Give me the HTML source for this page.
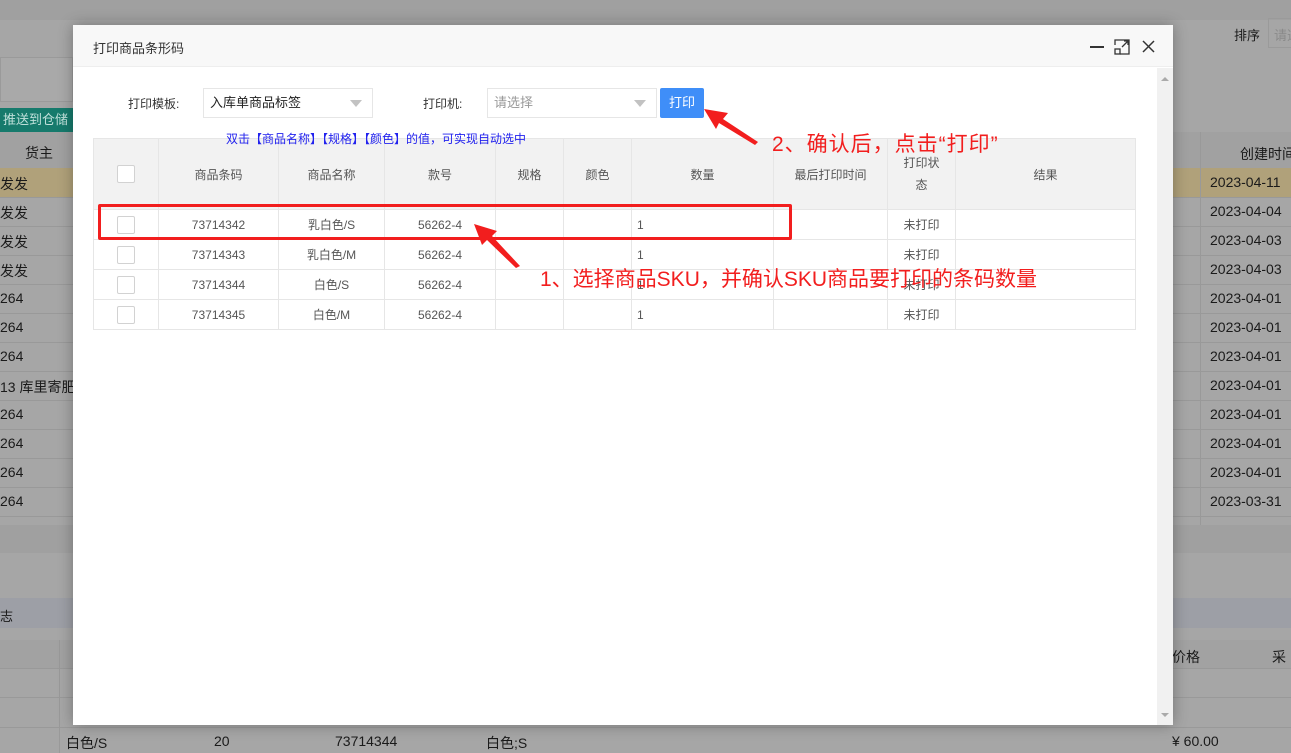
<!DOCTYPE html>
<html><head><meta charset="utf-8"><style>
*{margin:0;padding:0;box-sizing:border-box}
body{width:1291px;height:753px;overflow:hidden;background:#a6a6a6;font-family:"Liberation Sans","Noto Sans CJK SC",sans-serif;position:relative;font-size:13px;color:#222}
.a{position:absolute}
.bgt{position:absolute;font-size:14px;color:#1a1a1a;white-space:nowrap}
.hl{position:absolute;height:1px;background:#999}
.modal{position:absolute;left:73px;top:25px;width:1100px;height:700px;background:#fff;box-shadow:0 0 14px rgba(0,0,0,.3)}
.hd{position:absolute;left:0;top:0;width:1100px;height:42px;background:#f8f8f8;border-bottom:1px solid #eee}
table{border-collapse:collapse;position:absolute;left:20px;top:113px;table-layout:fixed}
td{border:1px solid #e6e6e6;text-align:center;font-size:12px;color:#555;height:30px;padding:0}
thead td{background:#f2f2f2;height:71px}
.cb{display:inline-block;width:18px;height:18px;border:1px solid #d2d2d2;background:#fff;border-radius:2px;vertical-align:middle}
.sel{position:absolute;height:30px;border:1px solid #e6e6e6;background:#fff;font-size:13px;line-height:28px;padding-left:6px}
.tri{position:absolute;right:10px;top:11px;width:0;height:0;border-left:6px solid transparent;border-right:6px solid transparent;border-top:7px solid #c2c2c2}
.red{position:absolute;color:#f21e1e;font-size:21px;white-space:nowrap}
</style></head><body>
<div class="a" style="left:0;top:0;width:1291px;height:20px;background:#a0a0a0"></div>
<div class="a" style="left:0;top:57px;width:73px;height:45px;border:1px solid #9a9a9a;background:#a9a9a9"></div>
<div class="a" style="left:0;top:108px;width:73px;height:24px;background:#167a6c;color:#bfe0da;font-size:13px;line-height:24px;padding-left:3px;white-space:nowrap;overflow:hidden">推送到仓储</div>
<div class="a" style="left:0;top:132px;width:1291px;height:36px;background:#a1a1a1"></div>
<div class="bgt" style="left:25px;top:143px">货主</div>
<div class="bgt" style="left:1240px;top:144px">创建时间</div>
<div class="a" style="left:0;top:168px;width:1291px;height:29px;background:#b0a17a"></div>
<div class="a" style="left:1200px;top:132px;width:1px;height:393px;background:#999"></div>
<div class="bgt" style="left:1234px;top:25px;font-size:13px">排序</div>
<div class="a" style="left:1268px;top:18px;width:30px;height:30px;border:1px solid #9a9a9a;color:#8a8a8a;font-size:13px;padding:6px 0 0 5px;white-space:nowrap;overflow:hidden">请选</div>
<div class="bgt" style="left:0;top:174px">发发</div>
<div class="bgt" style="left:0;top:203px">发发</div>
<div class="bgt" style="left:0;top:232px">发发</div>
<div class="bgt" style="left:0;top:261px">发发</div>
<div class="bgt" style="left:0;top:290px">264</div>
<div class="bgt" style="left:0;top:319px">264</div>
<div class="bgt" style="left:0;top:348px">264</div>
<div class="bgt" style="left:0;top:377px">13 库里寄肥</div>
<div class="bgt" style="left:0;top:406px">264</div>
<div class="bgt" style="left:0;top:435px">264</div>
<div class="bgt" style="left:0;top:464px">264</div>
<div class="bgt" style="left:0;top:493px">264</div>
<div class="bgt" style="left:1210px;top:174px">2023-04-11</div>
<div class="bgt" style="left:1210px;top:203px">2023-04-04</div>
<div class="bgt" style="left:1210px;top:232px">2023-04-03</div>
<div class="bgt" style="left:1210px;top:261px">2023-04-03</div>
<div class="bgt" style="left:1210px;top:290px">2023-04-01</div>
<div class="bgt" style="left:1210px;top:319px">2023-04-01</div>
<div class="bgt" style="left:1210px;top:348px">2023-04-01</div>
<div class="bgt" style="left:1210px;top:377px">2023-04-01</div>
<div class="bgt" style="left:1210px;top:406px">2023-04-01</div>
<div class="bgt" style="left:1210px;top:435px">2023-04-01</div>
<div class="bgt" style="left:1210px;top:464px">2023-04-01</div>
<div class="bgt" style="left:1210px;top:493px">2023-03-31</div>
<div class="hl" style="left:0;top:197px;width:1291px"></div>
<div class="hl" style="left:0;top:226px;width:1291px"></div>
<div class="hl" style="left:0;top:255px;width:1291px"></div>
<div class="hl" style="left:0;top:284px;width:1291px"></div>
<div class="hl" style="left:0;top:313px;width:1291px"></div>
<div class="hl" style="left:0;top:342px;width:1291px"></div>
<div class="hl" style="left:0;top:371px;width:1291px"></div>
<div class="hl" style="left:0;top:400px;width:1291px"></div>
<div class="hl" style="left:0;top:429px;width:1291px"></div>
<div class="hl" style="left:0;top:458px;width:1291px"></div>
<div class="hl" style="left:0;top:487px;width:1291px"></div>
<div class="hl" style="left:0;top:516px;width:1291px"></div>
<div class="a" style="left:0;top:525px;width:1291px;height:28px;background:#a0a0a0"></div>
<div class="a" style="left:0;top:598px;width:1291px;height:30px;background:#9d9fa6"></div>
<div class="bgt" style="left:0;top:606px;font-size:13px">志</div>
<div class="a" style="left:0;top:640px;width:1291px;height:28px;background:#a2a2a2"></div>
<div class="bgt" style="left:1172px;top:647px">价格</div>
<div class="bgt" style="left:1272px;top:647px">采</div>
<div class="hl" style="left:0;top:668px;width:1291px"></div>
<div class="hl" style="left:0;top:697px;width:1291px"></div>
<div class="hl" style="left:0;top:727px;width:1291px"></div>
<div class="a" style="left:59px;top:640px;width:1px;height:113px;background:#999"></div>
<div class="bgt" style="left:66px;top:733px">白色/S</div>
<div class="bgt" style="left:214px;top:733px">20</div>
<div class="bgt" style="left:335px;top:733px">73714344</div>
<div class="bgt" style="left:486px;top:733px">白色;S</div>
<div class="bgt" style="left:1172px;top:733px">¥ 60.00</div>

<div class="modal">
 <div class="hd"><div class="a" style="left:20px;top:13px;font-size:13px;color:#333">打印商品条形码</div>
  <div class="a" style="left:1017px;top:21px;width:14px;height:2px;background:#333"></div>
  <svg class="a" style="left:1041px;top:14px" width="16" height="16" viewBox="0 0 16 16" fill="none" stroke="#333" stroke-width="1.3"><path d="M1 6V1h14v14H6"/><rect x="1" y="10" width="5" height="5"/><path d="M8 8l6-6M10 2h4v4"/></svg>
  <svg class="a" style="left:1069px;top:15px" width="13" height="13" viewBox="0 0 13 13" stroke="#333" stroke-width="1.5"><path d="M1 1l11 11M12 1L1 12"/></svg>
 </div>
 <div class="a" style="left:1084px;top:43px;width:16px;height:657px;background:#f1f1f1"></div>
 <div class="a" style="left:1088px;top:52px;border-left:4px solid transparent;border-right:4px solid transparent;border-bottom:4px solid #aaa"></div>
 <div class="a" style="left:1088px;top:688px;border-left:4px solid transparent;border-right:4px solid transparent;border-top:4px solid #aaa"></div>
 <div class="a" style="left:55px;top:70px;font-size:12px;color:#333">打印模板:</div>
 <div class="sel" style="left:130px;top:63px;width:170px;color:#222">入库单商品标签<div class="tri"></div></div>
 <div class="a" style="left:350px;top:70px;font-size:12px;color:#333">打印机:</div>
 <div class="sel" style="left:414px;top:63px;width:170px;color:#999">请选择<div class="tri"></div></div>
 <div class="a" style="left:587px;top:63px;width:44px;height:30px;background:#3f8ef8;color:#fff;font-size:13px;line-height:30px;text-align:center;border-radius:2px">打印</div>
 <div class="a" style="left:153px;top:105px;font-size:12px;color:#2222ee;z-index:2">双击【商品名称】【规格】【颜色】的值，可实现自动选中</div>
 <table>
  <colgroup><col style="width:65px"><col style="width:120px"><col style="width:106px"><col style="width:111px"><col style="width:68px"><col style="width:68px"><col style="width:142px"><col style="width:114px"><col style="width:68px"><col style="width:180px"></colgroup>
  <thead><tr><td><span class="cb"></span></td><td>商品条码</td><td>商品名称</td><td>款号</td><td>规格</td><td>颜色</td><td>数量</td><td>最后打印时间</td><td style="line-height:22px">打印状<br>态</td><td>结果</td></tr></thead>
  <tbody>
  <tr><td><span class="cb"></span></td><td>73714342</td><td>乳白色/S</td><td>56262-4</td><td></td><td></td><td style="text-align:left;padding-left:5px">1</td><td></td><td>未打印</td><td></td></tr>
  <tr><td><span class="cb"></span></td><td>73714343</td><td>乳白色/M</td><td>56262-4</td><td></td><td></td><td style="text-align:left;padding-left:5px">1</td><td></td><td>未打印</td><td></td></tr>
  <tr><td><span class="cb"></span></td><td>73714344</td><td>白色/S</td><td>56262-4</td><td></td><td></td><td style="text-align:left;padding-left:5px">1</td><td></td><td>未打印</td><td></td></tr>
  <tr><td><span class="cb"></span></td><td>73714345</td><td>白色/M</td><td>56262-4</td><td></td><td></td><td style="text-align:left;padding-left:5px">1</td><td></td><td>未打印</td><td></td></tr>
  </tbody>
 </table>
</div>
<div class="a" style="left:98px;top:204px;width:694px;height:36px;border:3px solid #f21e1e;border-radius:2px"></div>
<svg class="a" style="left:0;top:0" width="1291" height="753"><polygon points="474,224 497,231 492,236 520,266 516,268 487,240 482,245" fill="#f21e1e"/><polygon points="704,109 728,113 723,119 758,142 755,145 719,123 716,129" fill="#f21e1e"/></svg>
<div class="red" style="left:540px;top:263px">1、选择商品SKU，并确认SKU商品要打印的条码数量</div>
<div class="red" style="left:772px;top:128px;letter-spacing:1px">2、确认后，点击“打印”</div>
</body></html>
